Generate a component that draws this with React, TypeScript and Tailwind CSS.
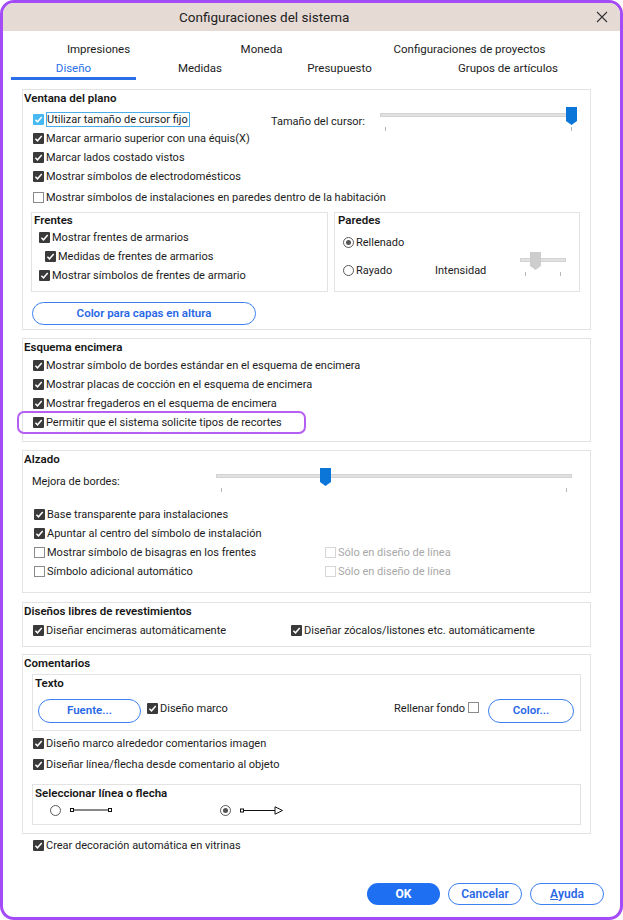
import React from "react";

type CbProps = { checked?: boolean; tone?: "dark" | "blue"; disabled?: boolean };

const Cb = ({ checked = true, tone = "dark", disabled = false }: CbProps) => {
  if (!checked)
    return (
      <span
        className={`inline-block w-[11px] h-[11px] shrink-0 border bg-white ${
          disabled ? "border-[#d6d6d6]" : "border-[#8a8a8a]"
        }`}
      />
    );
  return (
    <span
      className={`inline-flex items-center justify-center w-[11px] h-[11px] shrink-0 rounded-[1px] ${
        tone === "blue" ? "bg-[#46b8f2]" : "bg-[#3a3a3a]"
      }`}
    >
      <svg width="9" height="9" viewBox="0 0 9 9">
        <path d="M1.4 4.7 L3.5 6.8 L7.7 2.1" fill="none" stroke="white" strokeWidth="1.5" />
      </svg>
    </span>
  );
};

const Radio = ({ checked = false }: { checked?: boolean }) => (
  <span className="inline-flex items-center justify-center w-[11px] h-[11px] shrink-0 rounded-full border border-[#5a5a5a] bg-white">
    {checked && <span className="w-[5px] h-[5px] rounded-full bg-[#555]" />}
  </span>
);

const Row = ({ children, className = "" }: { children: React.ReactNode; className?: string }) => (
  <div className={`flex items-center h-[19px] gap-[2px] ${className}`}>{children}</div>
);

type SliderProps = { width: number; value: number; gray?: boolean; className?: string };

const Slider = ({ width, value, gray = false, className = "" }: SliderProps) => {
  const thumbW = 11;
  const left = Math.round(value * (width - thumbW));
  return (
    <div className={`relative h-[24px] shrink-0 ${className}`} style={{ width }}>
      <div className="absolute left-0 right-0 top-[6px] h-[4px] bg-[#e1e1e1] border border-[#d3d3d3]" />
      <div className="absolute top-[20px] left-[5px] w-px h-[4px] bg-[#b8b8b8]" />
      <div className="absolute top-[20px] w-px h-[4px] bg-[#b8b8b8]" style={{ left: width - 6 }} />
      <svg className="absolute top-0" style={{ left }} width="11" height="18" viewBox="0 0 11 18">
        <path d="M0 0 H11 V14 L5.5 18 L0 14 Z" fill={gray ? "#cdcdcd" : "#0b76d8"} />
      </svg>
    </div>
  );
};

const Box = ({ children, className = "" }: { children: React.ReactNode; className?: string }) => (
  <div className={`ml-[19px] w-[569px] border border-[#e3e3e3] ${className}`}>{children}</div>
);

const Title = ({ children, className = "" }: { children: React.ReactNode; className?: string }) => (
  <div className={`flex items-center font-semibold text-[11.5px] text-[#161616] ${className}`}>{children}</div>
);

const PillBtn = ({ children, className = "" }: { children: React.ReactNode; className?: string }) => (
  <div
    className={`flex items-center justify-center rounded-full border border-[#3c7ff0] text-[#2968e6] font-semibold text-[11.5px] bg-white ${className}`}
  >
    {children}
  </div>
);

export default function App() {
  return (
    <div className="w-[623px] h-[920px] bg-white border-[3px] border-[#a34bf6] rounded-[14px] overflow-hidden flex flex-col font-[family-name:Roboto] text-[11px] text-[#1c1c1c] leading-none">
      {/* title bar */}
      <div className="h-[28px] bg-[#e6dad5] flex items-center justify-between pl-[176px] pr-[12px] shrink-0">
        <span className="text-[13.5px] text-[#222] mt-[1px]">Configuraciones del sistema</span>
        <svg width="12" height="12" viewBox="0 0 12 12">
          <path d="M1 1 L11 11 M11 1 L1 11" stroke="#333" strokeWidth="1.1" />
        </svg>
      </div>

      {/* tabs */}
      <div className="pt-[10px] pl-[8px] shrink-0 text-[11.5px]">
        <div className="flex h-[18px] items-center">
          <div className="w-[175px] text-center">Impresiones</div>
          <div className="w-[151px] text-center">Moneda</div>
          <div className="w-[265px] text-center">Configuraciones de proyectos</div>
        </div>
        <div className="flex h-[21px]">
          <div className="w-[125px] flex items-center justify-center pt-[2px] text-[#2a6fe8] border-b-[3px] border-[#2a6fe8]">
            Diseño
          </div>
          <div className="w-[128px] flex items-center justify-center pt-[2px] pb-[3px]">Medidas</div>
          <div className="w-[151px] flex items-center justify-center pt-[2px] pb-[3px]">Presupuesto</div>
          <div className="w-[186px] flex items-center justify-center pt-[2px] pb-[3px]">Grupos de artículos</div>
        </div>
      </div>

      {/* Ventana del plano */}
      <Box className="mt-[9px] pb-[4px]">
        <Title className="h-[17px] pl-[1px] pt-[1px]">Ventana del plano</Title>
        <div className="flex mt-[3px]">
          <div className="w-[248px] pl-[10px]">
            <Row>
              <Cb tone="blue" />
              <span className="border border-[#49aee8] h-[15px] flex items-center pr-[1px]">
                Utilizar tamaño de cursor fijo
              </span>
            </Row>
            <Row>
              <Cb />
              <span>Marcar armario superior con una équis(X)</span>
            </Row>
            <Row>
              <Cb />
              <span>Marcar lados costado vistos</span>
            </Row>
            <Row>
              <Cb />
              <span>Mostrar símbolos de electrodomésticos</span>
            </Row>
          </div>
          <div className="flex items-start">
            <span className="w-[109px] mt-[6px]">Tamaño del cursor:</span>
            <Slider width={197} value={1} className="-mt-[3px]" />
          </div>
        </div>
        <Row className="mt-[2px] pl-[10px]">
          <Cb checked={false} />
          <span>Mostrar símbolos de instalaciones en paredes dentro de la habitación</span>
        </Row>
        <div className="flex gap-[6px] mt-[5px] pl-[8px]">
          <div className="w-[297px] h-[80px] border border-[#e3e3e3]">
            <Title className="h-[15px] pl-[2px] pt-[1px]">Frentes</Title>
            <Row className="pl-[7px]">
              <Cb />
              <span>Mostrar frentes de armarios</span>
            </Row>
            <Row className="pl-[13px]">
              <Cb />
              <span>Medidas de frentes de armarios</span>
            </Row>
            <Row className="pl-[7px]">
              <Cb />
              <span>Mostrar símbolos de frentes de armario</span>
            </Row>
          </div>
          <div className="w-[246px] h-[80px] border border-[#e3e3e3]">
            <Title className="h-[15px] pl-[3px] pt-[1px]">Paredes</Title>
            <div className="flex items-center h-[18px] mt-[5px] pl-[8px] gap-[2px]">
              <Radio checked />
              <span>Rellenado</span>
            </div>
            <div className="flex items-start h-[18px] mt-[10px] pl-[8px]">
              <div className="w-[92px] h-[18px] flex items-center gap-[2px]">
                <Radio />
                <span>Rayado</span>
              </div>
              <span className="w-[85px] h-[18px] flex items-center">Intensidad</span>
              <Slider width={46} value={0.29} gray className="-mt-[9px]" />
            </div>
          </div>
        </div>
        <PillBtn className="mt-[10px] ml-[9px] w-[224px] h-[23px]">Color para capas en altura</PillBtn>
      </Box>

      {/* Esquema encimera */}
      <Box className="mt-[8px] pb-[9px]">
        <Title className="h-[17px] pl-[1px] pt-[1px]">Esquema encimera</Title>
        <div className="pl-[10px]">
          <Row>
            <Cb />
            <span>Mostrar símbolo de bordes estándar en el esquema de encimera</span>
          </Row>
          <Row>
            <Cb />
            <span>Mostrar placas de cocción en el esquema de encimera</span>
          </Row>
          <Row>
            <Cb />
            <span>Mostrar fregaderos en el esquema de encimera</span>
          </Row>
          <div className="relative">
            <Row>
              <Cb />
              <span>Permitir que el sistema solicite tipos de recortes</span>
            </Row>
            <span className="absolute -left-[16px] -top-[2px] w-[289px] h-[23px] border-2 border-[#b45ef2] rounded-[7px] pointer-events-none" />
          </div>
        </div>
      </Box>

      {/* Alzado */}
      <Box className="mt-[8px] pb-[11px]">
        <Title className="h-[17px] pl-[1px] pt-[1px]">Alzado</Title>
        <div className="flex h-[37px]">
          <span className="w-[193px] h-[26px] pl-[9px] flex items-center">Mejora de bordes:</span>
          <Slider width={356} value={0.3} />
        </div>
        <div className="pl-[11px]">
          <Row>
            <Cb />
            <span>Base transparente para instalaciones</span>
          </Row>
          <Row>
            <Cb />
            <span>Apuntar al centro del símbolo de instalación</span>
          </Row>
          <div className="flex">
            <Row className="w-[291px]">
              <Cb checked={false} />
              <span>Mostrar símbolo de bisagras en los frentes</span>
            </Row>
            <Row>
              <Cb checked={false} disabled />
              <span className="text-[#a8a8a8]">Sólo en diseño de línea</span>
            </Row>
          </div>
          <div className="flex">
            <Row className="w-[291px]">
              <Cb checked={false} />
              <span>Símbolo adicional automático</span>
            </Row>
            <Row>
              <Cb checked={false} disabled />
              <span className="text-[#a8a8a8]">Sólo en diseño de línea</span>
            </Row>
          </div>
        </div>
      </Box>

      {/* Diseños libres */}
      <Box className="mt-[9px] pb-[6px]">
        <Title className="h-[17px] pl-[1px] pt-[1px]">Diseños libres de revestimientos</Title>
        <div className="flex mt-[1px] pl-[10px]">
          <Row className="w-[258px]">
            <Cb />
            <span>Diseñar encimeras automáticamente</span>
          </Row>
          <Row>
            <Cb />
            <span>Diseñar zócalos/listones etc. automáticamente</span>
          </Row>
        </div>
      </Box>

      {/* Comentarios */}
      <Box className="mt-[7px] pb-[8px]">
        <Title className="h-[16px] pl-[1px] pt-[1px]">Comentarios</Title>
        <div className="mt-[3px] ml-[9px] w-[549px] border border-[#e3e3e3] pb-[7px]">
          <Title className="h-[16px] pl-[2px] pt-[1px]">Texto</Title>
          <div className="flex items-center mt-[8px] h-[24px] pl-[5px] pr-[6px]">
            <PillBtn className="w-[103px] h-[24px]">Fuente...</PillBtn>
            <div className="flex items-center gap-[2px] ml-[6px] -mt-[5px]">
              <Cb />
              <span>Diseño marco</span>
            </div>
            <div className="flex items-center ml-auto -mt-[5px]">
              <span>Rellenar fondo</span>
              <span className="ml-[3px]">
                <Cb checked={false} />
              </span>
            </div>
            <PillBtn className="ml-[9px] w-[86px] h-[24px]">Color...</PillBtn>
          </div>
        </div>
        <div className="pl-[10px]">
          <Row className="mt-[3px]">
            <Cb />
            <span>Diseño marco alrededor comentarios imagen</span>
          </Row>
          <Row className="mt-[2px]">
            <Cb />
            <span>Diseñar línea/flecha desde comentario al objeto</span>
          </Row>
        </div>
        <div className="mt-[10px] ml-[9px] w-[549px] border border-[#e3e3e3] pb-[5px]">
          <Title className="h-[16px] pl-[2px] pt-[1px]">Seleccionar línea o flecha</Title>
          <div className="flex items-center h-[18px] pl-[17px]">
            <Radio />
            <svg className="ml-[9px]" width="42" height="6" viewBox="0 0 42 6">
              <rect x="0.5" y="1.5" width="3" height="3" fill="white" stroke="#111" strokeWidth="1" />
              <path d="M3.5 3 H38.5" stroke="#111" strokeWidth="1" />
              <rect x="38.5" y="1.5" width="3" height="3" fill="white" stroke="#111" strokeWidth="1" />
            </svg>
            <span className="ml-[108px]">
              <Radio checked />
            </span>
            <svg className="ml-[9px]" width="44" height="9" viewBox="0 0 44 9">
              <rect x="0.5" y="3" width="3" height="3" fill="white" stroke="#111" strokeWidth="1" />
              <path d="M3.5 4.5 H35" stroke="#111" strokeWidth="1" />
              <path d="M35 0.8 L42.5 4.5 L35 8.2 Z" fill="white" stroke="#111" strokeWidth="1" />
            </svg>
          </div>
        </div>
      </Box>

      <Row className="mt-[2px] pl-[30px]">
        <Cb />
        <span>Crear decoración automática en vitrinas</span>
      </Row>

      <div className="flex-1" />

      {/* footer */}
      <div className="flex justify-end gap-[8px] pr-[16px] pb-[12px] shrink-0">
        <div className="w-[73px] h-[22px] rounded-full bg-[#1f6ff3] text-white font-bold text-[12px] flex items-center justify-center">
          OK
        </div>
        <PillBtn className="w-[74px] h-[22px] text-[12px]">Cancelar</PillBtn>
        <PillBtn className="w-[74px] h-[22px] text-[12px]">
          <span className="underline">A</span>yuda
        </PillBtn>
      </div>
    </div>
  );
}
